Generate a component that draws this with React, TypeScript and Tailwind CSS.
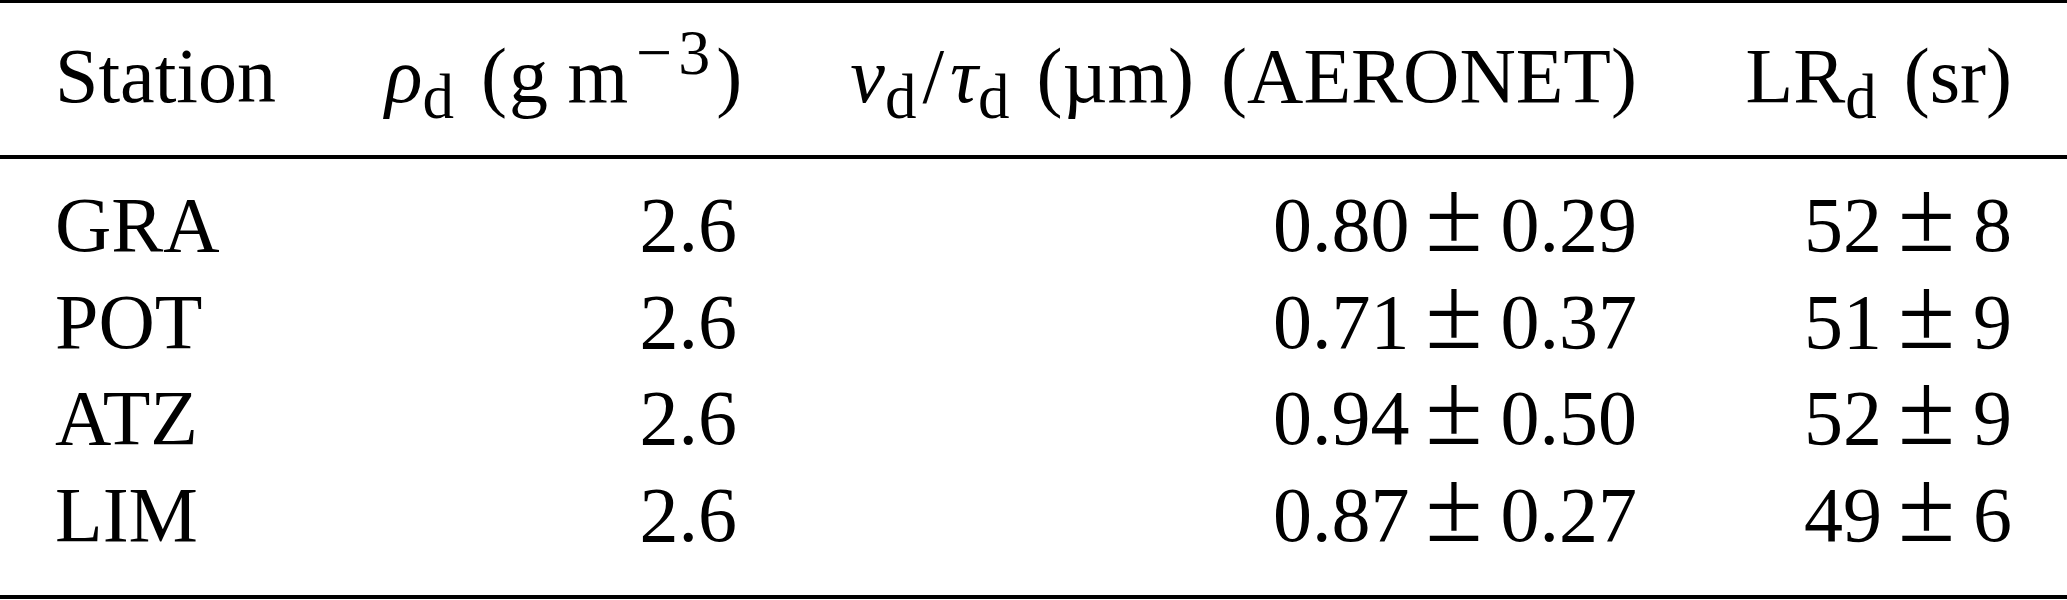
const rows = [
  { station: "GRA", rho: "2.6", vt: ["0.80", "0.29"], lr: ["52", "8"] },
  { station: "POT", rho: "2.6", vt: ["0.71", "0.37"], lr: ["51", "9"] },
  { station: "ATZ", rho: "2.6", vt: ["0.94", "0.50"], lr: ["52", "9"] },
  { station: "LIM", rho: "2.6", vt: ["0.87", "0.27"], lr: ["49", "6"] },
];

function Sub({ children }: { children: string }) {
  return <span className="relative top-[16px] text-[63px] leading-none">{children}</span>;
}

function PlusMinus({ pair }: { pair: string[] }) {
  return (
    <>
      {pair[0]}
      <span className="ml-[16px] mr-[18px] text-[104px] leading-[0]">±</span>
      {pair[1]}
    </>
  );
}

export default function App() {
  return (
    <div className="w-[2067px] h-[600px] bg-white text-black font-['Liberation_Serif',serif] text-[78px] overflow-hidden">
      <div className="border-t-[3px] border-black" />
      <div className="grid grid-cols-[330px_352px_900px_375px] pl-[55px] pt-[25px] pb-[31px] leading-[96px] whitespace-nowrap">
        <div>Station</div>
        <div className="text-right">
          <span className="italic">ρ</span>
          <Sub>d</Sub>
          <span className="ml-[27px]">(</span>
          <span className="ml-[2px]">g</span> m
          <span className="relative top-[-28px] ml-[8px] text-[64px] leading-none">
            <span className="mr-[6px]">−</span>3
          </span>
          <span className="ml-[6px]">)</span>
        </div>
        <div className="text-right">
          <span className="italic">v</span>
          <Sub>d</Sub>
          <span className="ml-[6px] mr-[6px]">/</span>
          <span className="italic">τ</span>
          <Sub>d</Sub>
          <span className="ml-[27px]">(µm)</span>
          <span className="ml-[27px]">(AERONET)</span>
        </div>
        <div className="text-right">
          LR<Sub>d</Sub>
          <span className="ml-[27px]">(sr)</span>
        </div>
      </div>
      <div className="border-t-[4px] border-black" />
      <div className="pt-[18px] pb-[32px] leading-[96.5px] whitespace-nowrap">
        {rows.map((r) => (
          <div key={r.station} className="grid grid-cols-[330px_352px_900px_375px] pl-[55px]">
            <div>{r.station}</div>
            <div className="text-right">{r.rho}</div>
            <div className="text-right">
              <PlusMinus pair={r.vt} />
            </div>
            <div className="text-right">
              <PlusMinus pair={r.lr} />
            </div>
          </div>
        ))}
      </div>
      <div className="border-t-[4px] border-black" />
    </div>
  );
}
